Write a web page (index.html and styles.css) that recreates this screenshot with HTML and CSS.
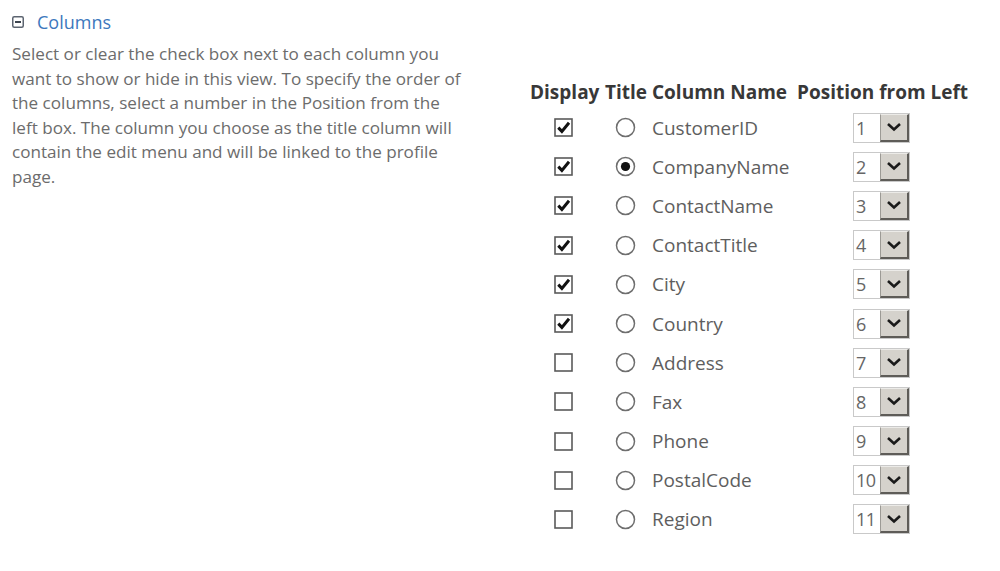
FILE: index.html
```html
<!DOCTYPE html>
<html>
<head>
<meta charset="utf-8">
<link rel="stylesheet" href="styles.css">
</head>
<body>
<div class="page">
  <section class="intro">
    <h2 class="section-title">
      <svg class="collapse-icon" width="12" height="12" viewBox="0 0 12 12"><rect x="0.75" y="0.75" width="10.5" height="10.5" rx="1.5" fill="#fff" stroke="#5c6470" stroke-width="1.5"/><rect x="3" y="5" width="6" height="2" fill="#3d4550"/></svg>
      <span>Columns</span>
    </h2>
    <p class="desc">Select or clear the check box next to each column you want to show or hide in this view. To specify the order of the columns, select a number in the Position from the left box. The column you choose as the title column will contain the edit menu and will be linked to the profile page.</p>
  </section>
  <section class="cols">
    <div class="grid">
      <div class="hd hd-display">Display</div>
      <div class="hd hd-title">Title</div>
      <div class="hd hd-name">Column Name</div>
      <div class="hd hd-pos">Position from Left</div>
    </div>
    <div id="rows"></div>
  </section>
</div>
<script src="app.js"></script>
</body>
</html>
```

FILE: app.js
```js
var data = [
  ["CustomerID", true, false],
  ["CompanyName", true, true],
  ["ContactName", true, false],
  ["ContactTitle", true, false],
  ["City", true, false],
  ["Country", true, false],
  ["Address", false, false],
  ["Fax", false, false],
  ["Phone", false, false],
  ["PostalCode", false, false],
  ["Region", false, false]
];
var check = '<svg class="cb" width="19" height="19" viewBox="0 0 19 19"><rect x="1" y="1" width="17" height="17" fill="#fff" stroke="#5a5a5a" stroke-width="1.6"/>';
var tick = '<path d="M4.3 9.6 L7.9 13.4 L15 4.8" fill="none" stroke="#111" stroke-width="3" stroke-linejoin="miter"/>';
var html = "";
data.forEach(function (d, i) {
  html += '<div class="grid row">' +
    '<div class="c1">' + check + (d[1] ? tick : "") + '</svg></div>' +
    '<div class="c2"><svg width="21" height="21" viewBox="0 0 21 21"><circle cx="10.5" cy="10.5" r="9" fill="#fff" stroke="#6e6e6e" stroke-width="1.5"/>' + (d[2] ? '<circle cx="10.5" cy="10.5" r="4.6" fill="#111"/>' : '') + '</svg></div>' +
    '<div class="c3">' + d[0] + '</div>' +
    '<div class="c4"><div class="sel"><span class="num">' + (i + 1) + '</span><span class="btn"><svg width="16" height="10" viewBox="0 0 16 10"><path d="M2 2 L8 7.5 L14 2" fill="none" stroke="#1a1a1a" stroke-width="2.6"/></svg></span></div></div>' +
    '</div>';
});
document.getElementById("rows").innerHTML = html;
```

FILE: styles.css
```css
html, body {
  margin: 0;
  padding: 0;
  background: #fff;
}
.page {
  display: flex;
  width: 1000px;
  height: 571px;
  font-family: "Open Sans", "Noto Sans", sans-serif;
}
.intro {
  width: 468px;
  flex: none;
  padding: 10px 0 0 12px;
  box-sizing: border-box;
}
.section-title {
  display: flex;
  align-items: center;
  gap: 13px;
  margin: 0;
  font-weight: normal;
  font-size: 18px;
  color: #3c78bd;
  height: 24px;
}
.collapse-icon {
  flex: none;
}
.desc {
  margin: 8px 0 0 0;
  font-size: 17.1px;
  line-height: 24.5px;
  color: #6c6c6c;
}
.cols {
  padding: 80px 0 0 62px;
}
.grid {
  display: grid;
  grid-template-columns: 70px 48px 149px 173px;
  align-items: center;
}
.hd {
  font-weight: bold;
  font-size: 19px;
  color: #383838;
  height: 24px;
  line-height: 24px;
  white-space: nowrap;
}
.hd-title { padding-left: 5px; }
.hd-name { padding-left: 4px; }
.row {
  height: 39.2px;
}
.row:first-child {
  margin-top: 4px;
}
.c1 { padding-left: 24px; display: flex; }
.c2 { padding-left: 15px; display: flex; }
.c3 {
  padding-left: 4px;
  font-size: 19px;
  color: #5e5e5e;
  white-space: nowrap;
}
.c4 { padding-left: 56px; }
.sel {
  display: flex;
  width: 57px;
  height: 30px;
  border: 1px solid #c9c9c9;
  box-sizing: border-box;
  background: #fff;
}
.num {
  width: 26px;
  font-size: 18px;
  line-height: 28px;
  color: #666;
  padding-left: 2px;
  box-sizing: border-box;
  white-space: nowrap;
  letter-spacing: -0.5px;
}
.btn {
  flex: 1;
  display: flex;
  align-items: center;
  justify-content: center;
  background: #d5d2cc;
  border-top: 1px solid #ecebe8;
  border-left: 1px solid #9c9a95;
  border-right: 2px solid #5e5c58;
  border-bottom: 2px solid #5e5c58;
}
```
